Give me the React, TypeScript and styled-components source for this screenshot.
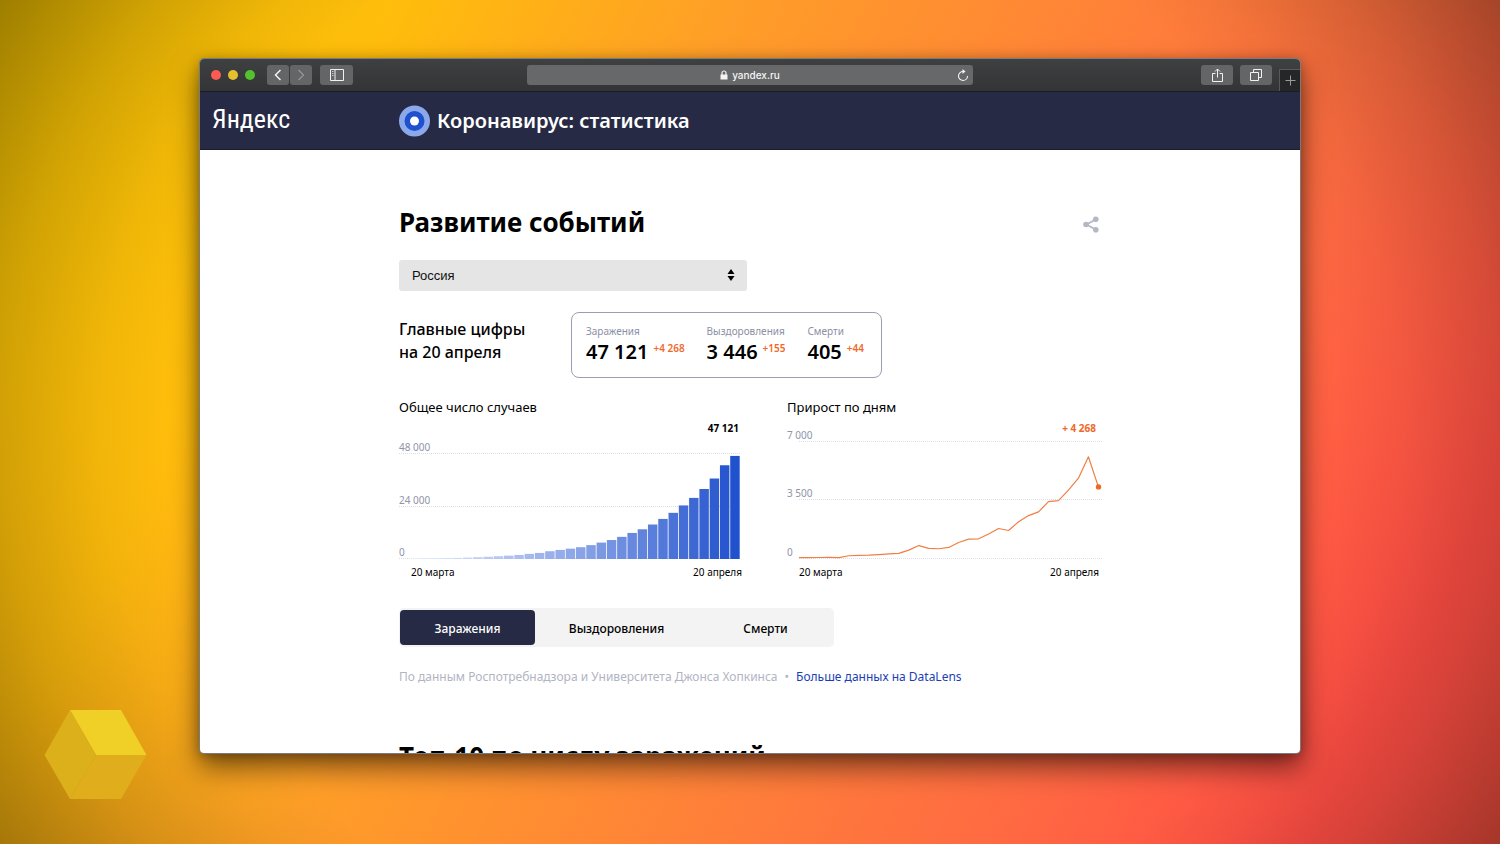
import React, { useState } from "react";
import styled, { createGlobalStyle } from "styled-components";

const sans = `"Noto Sans", "Open Sans", sans-serif`;

const GlobalStyle = createGlobalStyle`
  * { box-sizing: border-box; }
  body { margin: 0; font-family: ${sans}; color: #000; }
  button, select { font-family: inherit; }
  h1, h2, h3, p, dl, dd, dt, figure { margin: 0; font-weight: inherit; }
  svg { display: block; }
`;

const Desktop = styled.div`
  position: relative;
  height: 100vh;
  padding: 58px 199px 90px;
  overflow: hidden;
  background:
    radial-gradient(ellipse 50% 83% at 50% 50%, transparent 78%, rgba(30, 20, 0, 0.05) 87%, rgba(30, 20, 0, 0.18) 100%, rgba(30, 20, 0, 0.4) 117%),
    linear-gradient(118deg, #f2c400 0%, #ffbc0c 21%, #ff9e28 38%, #ff7e3a 60%, #ff6a42 74%, #ff4c45 90%);
`;

const Cube = styled.svg`
  position: absolute;
  left: 44px;
  bottom: 44px;
`;

const Browser = styled.div`
  display: flex;
  flex-direction: column;
  height: 100%;
  border: 1px solid rgba(90, 90, 90, 0.8);
  border-radius: 5px;
  overflow: hidden;
  background: #fff;
  box-shadow: 0 14px 28px rgba(0, 0, 0, 0.5), 0 2px 12px rgba(0, 0, 0, 0.25);
`;

const TitleBar = styled.div`
  display: grid;
  grid-template-columns: 1fr 446px 1fr;
  align-items: center;
  flex: none;
  height: 33px;
  background: linear-gradient(#3e4042, #333435);
  border-bottom: 1px solid #1c1d22;
`;

const BarLeft = styled.div`
  display: flex;
  align-items: center;
  padding-left: 11px;
`;

const Lights = styled.div`
  display: flex;
  gap: 7px;
  margin-right: 12px;
`;

const Light = styled.span<{ $color: string }>`
  width: 10px;
  height: 10px;
  border-radius: 50%;
  background: ${(p) => p.$color};
`;

const ToolButton = styled.button<{ $width: number; $dim?: boolean }>`
  display: flex;
  align-items: center;
  justify-content: center;
  width: ${(p) => p.$width}px;
  height: 20px;
  padding: 0;
  border: 0;
  border-radius: 3px;
  background: #646567;
  color: ${(p) => (p.$dim ? "#949597" : "#f2f2f2")};
`;

const NavGroup = styled.div`
  display: flex;
  gap: 1px;
  margin-right: 8px;
`;

const AddressBar = styled.div`
  display: grid;
  grid-template-columns: 1fr auto 1fr;
  align-items: center;
  height: 20px;
  padding: 0 4px;
  border-radius: 3px;
  background: #67686a;
  color: #f4f4f4;
`;

const Address = styled.div`
  display: flex;
  grid-column: 2;
  align-items: center;
  gap: 4px;
  font: 500 10px/20px Inter, "Liberation Sans", sans-serif;
`;

const ReloadButton = styled.button`
  justify-self: end;
  padding: 0;
  border: 0;
  background: none;
  color: inherit;
`;

const BarRight = styled.div`
  display: flex;
  align-items: center;
  align-self: stretch;
  justify-content: flex-end;
  gap: 7px;
`;

const NewTab = styled.button`
  display: flex;
  align-items: center;
  justify-content: center;
  align-self: flex-end;
  width: 21px;
  height: 22px;
  padding: 0;
  border: solid #58595b;
  border-width: 1px 0 0 1px;
  background: #252628;
  color: #9b9b9b;
`;

const SiteHeader = styled.header`
  display: grid;
  grid-template-columns: 1fr minmax(0, 702px) 1fr;
  align-items: center;
  flex: none;
  height: 58px;
  background: #272a45;
  border-bottom: 1px solid #1a1c35;
  color: #fff;
`;

const Logo = styled.a`
  padding: 0 0 4px 12px;
  font: 400 26px/36px "Roboto Condensed", Roboto, sans-serif;
  color: #fff;
  text-decoration: none;
`;

const Brand = styled.div`
  display: flex;
  align-items: center;
  gap: 7px;
  font-size: 20px;
  line-height: 28px;
  font-weight: 600;
`;

const Main = styled.main`
  width: 100%;
  max-width: 702px;
  margin: 0 auto;
  padding-top: 52px;
`;

const HeadingRow = styled.div`
  display: flex;
  align-items: center;
  justify-content: space-between;
`;

const Heading = styled.h1`
  font-size: 26px;
  line-height: 40px;
  font-weight: 700;
`;

const ShareButton = styled.button`
  margin: 4px 2px 0 0;
  padding: 0;
  border: 0;
  background: none;
  color: #b4b8c5;
`;

const SelectBox = styled.label`
  display: block;
  position: relative;
  width: 348px;
  margin-top: 18px;
  svg {
    position: absolute;
    right: 12px;
    top: 9px;
    pointer-events: none;
  }
`;

const Select = styled.select`
  display: block;
  width: 100%;
  height: 31px;
  padding: 0 13px;
  appearance: none;
  border: 0;
  border-radius: 3px;
  background: #e5e5e5;
  color: #111;
  font: 13px/31px "Liberation Sans", sans-serif;
`;

const Summary = styled.section`
  display: flex;
  align-items: center;
  margin-top: 21px;
`;

const SummaryTitle = styled.h2`
  width: 172px;
  padding-bottom: 8px;
  font-size: 16px;
  line-height: 23px;
  font-weight: 500;
`;

const Figures = styled.dl`
  display: flex;
  gap: 22px;
  height: 66px;
  padding: 11px 17px 0 14px;
  border: 1px solid #9a9eb0;
  border-radius: 8px;
`;

const FigureLabel = styled.dt`
  font-size: 10px;
  line-height: 14px;
  color: #8b90a6;
`;

const FigureValue = styled.dd`
  display: flex;
  gap: 5px;
  font-size: 20px;
  line-height: 28px;
  font-weight: 600;
`;

const Delta = styled.span`
  font-size: 10px;
  line-height: 20px;
  color: #f0692a;
`;

const Charts = styled.div`
  display: grid;
  grid-template-columns: 344px 315px;
  column-gap: 44px;
  margin-top: 19px;
`;

const ChartTitle = styled.figcaption`
  font-size: 13px;
  line-height: 20px;
`;

const ChartSvg = styled.svg`
  overflow: visible;
  text {
    font-family: ${sans};
    font-size: 10px;
  }
`;

const AxisText = styled.text`
  fill: #8f94a8;
`;

const DateText = styled.text`
  fill: #000;
`;

const PeakText = styled.text<{ $color: string }>`
  font-weight: 700;
  fill: ${(p) => p.$color};
`;

const GridLine = styled.line`
  stroke: #dcdfe6;
  stroke-dasharray: 1 1;
`;

const Tabs = styled.div`
  display: inline-flex;
  margin-top: 21px;
  padding: 2px 1px;
  border-radius: 5px;
  background: #f3f3f3;
`;

const Tab = styled.button<{ $active: boolean; $width: number }>`
  width: ${(p) => p.$width}px;
  height: 35px;
  padding: 1px 0 0;
  border: 0;
  border-radius: 4px;
  background: ${(p) => (p.$active ? "#272a45" : "transparent")};
  color: ${(p) => (p.$active ? "#fff" : "#000")};
  font-size: 12px;
  font-weight: 500;
`;

const Source = styled.p`
  margin-top: 20px;
  font-size: 12px;
  line-height: 20px;
  color: #b1b4c3;
`;

const Dot = styled.span`
  margin: 0 7px;
`;

const SourceLink = styled.a`
  color: #1a3fb5;
  text-decoration: none;
`;

const NextHeading = styled.h2`
  margin-top: 49px;
  font-size: 26px;
  line-height: 40px;
  font-weight: 700;
`;

const totals = [
  253, 306, 367, 438, 495, 658, 840, 1036, 1264, 1534, 1836, 2337, 2777, 3548, 4149, 4731, 5389, 6343, 7497, 8672,
  10131, 11917, 13584, 15770, 18328, 21102, 24490, 27938, 32008, 36793, 42853, 47121,
];

const daily = [
  54, 53, 61, 71, 57, 163, 182, 196, 228, 270, 302, 501, 771, 601, 582, 658, 954, 1154, 1175, 1459, 1786, 1667, 2186,
  2558, 2774, 3388, 3448, 4070, 4785, 6060, 4268,
];

const mix = (t: number) => {
  const from = [228, 235, 252];
  const mid = [130, 158, 229];
  const to = [33, 82, 205];
  const [a, b, k] = t < 0.55 ? [from, mid, t / 0.55] : [mid, to, (t - 0.55) / 0.45];
  return `rgb(${a.map((v, i) => Math.round(v + (b[i] - v) * k)).join(",")})`;
};

function TotalsChart() {
  const step = 329 / totals.length;
  return (
    <ChartSvg width="344" height="170" role="img" aria-label="Общее число случаев">
      {[
        ["48 000", 36],
        ["24 000", 89],
        ["0", 141],
      ].map(([label, y]) => (
        <g key={label}>
          <AxisText x="0" y={Number(y) - 2}>{label}</AxisText>
          <GridLine x1="0" x2="341" y1={Number(y) + 0.5} y2={Number(y) + 0.5} />
        </g>
      ))}
      {totals.map((v, i) => {
        const h = (v / 48000) * 105;
        return <rect key={v} x={12.5 + i * step} y={142 - h} width={step - 0.8} height={h} fill={mix(i / 31)} />;
      })}
      <PeakText $color="#000" x="340" y="15" textAnchor="end">47 121</PeakText>
      <DateText x="12" y="159">20 марта</DateText>
      <DateText x="343" y="159" textAnchor="end">20 апреля</DateText>
    </ChartSvg>
  );
}

function DailyChart() {
  const points = daily.map((v, i) => `${12 + i * 9.98},${141.5 - (v / 7000) * 117.5}`).join(" ");
  return (
    <ChartSvg width="315" height="170" role="img" aria-label="Прирост по дням">
      {[
        ["7 000", 24],
        ["3 500", 82],
        ["0", 141],
      ].map(([label, y]) => (
        <g key={label}>
          <AxisText x="0" y={Number(y) - 2}>{label}</AxisText>
          <GridLine x1="12" x2="315" y1={Number(y) + 0.5} y2={Number(y) + 0.5} />
        </g>
      ))}
      <polyline points={points} fill="none" stroke="#ef7f43" strokeWidth="1.2" strokeLinejoin="round" />
      <circle cx="311.5" cy="69.9" r="2.7" fill="#ee6a22" />
      <PeakText $color="#f0692a" x="309" y="15" textAnchor="end">+ 4 268</PeakText>
      <DateText x="12" y="159">20 марта</DateText>
      <DateText x="312" y="159" textAnchor="end">20 апреля</DateText>
    </ChartSvg>
  );
}

const figures = [
  { label: "Заражения", value: "47 121", delta: "+4 268" },
  { label: "Выздоровления", value: "3 446", delta: "+155" },
  { label: "Смерти", value: "405", delta: "+44" },
];

const tabs = [
  { label: "Заражения", width: 135 },
  { label: "Выздоровления", width: 163 },
  { label: "Смерти", width: 135 },
];

export default function App() {
  const [active, setActive] = useState(0);
  const line = { fill: "none", stroke: "currentColor" };
  return (
    <>
      <GlobalStyle />
      <Desktop>
        <Cube width="103" height="91" viewBox="0 0 103 91" aria-hidden="true">
          <path d="M26 1H77L102.500 46H52Z" fill="#f0cf27" />
          <path d="M26 1L52 46L26 90L0.500 46Z" fill="#dbb01a" />
          <path d="M52 46H102.500L77 90H26Z" fill="#e0ae1d" />
        </Cube>
        <Browser>
          <TitleBar>
            <BarLeft>
              <Lights>
                <Light $color="#fb5b52" />
                <Light $color="#e5bf2d" />
                <Light $color="#53c22c" />
              </Lights>
              <NavGroup>
                <ToolButton $width={22} aria-label="Назад">
                  <svg width="8" height="12" {...line} strokeWidth="1.5"><path d="M6.500 1L1.500 6L6.500 11" /></svg>
                </ToolButton>
                <ToolButton $width={22} $dim aria-label="Вперёд">
                  <svg width="8" height="12" {...line} strokeWidth="1.300"><path d="M1.500 1L6.500 6L1.500 11" /></svg>
                </ToolButton>
              </NavGroup>
              <ToolButton $width={33} aria-label="Боковая панель">
                <svg width="14" height="12" {...line}>
                  <path d="M0.500 0.500H13.500V11.500H0.500ZM5 0.500V11.500" />
                  <path d="M2 2.500H3.500M2 4.500H3.500M2 6.500H3.500" strokeWidth="0.700" />
                </svg>
              </ToolButton>
            </BarLeft>
            <AddressBar>
              <Address>
                <svg width="8" height="10">
                  <path d="M0.500 4.500H7.500V9.500H0.500Z" fill="currentColor" />
                  <path d="M2 5V3A2 2 0 0 1 6 3V5" {...line} strokeWidth="1.200" />
                </svg>
                yandex.ru
              </Address>
              <ReloadButton aria-label="Обновить">
                <svg width="12" height="13" {...line} strokeWidth="1.100">
                  <path d="M10.500 7A4.500 4.500 0 1 1 6 2.500H7.500" />
                  <path d="M5.500 0L8.500 2.500L5.500 5Z" fill="currentColor" stroke="none" />
                </svg>
              </ReloadButton>
            </AddressBar>
            <BarRight>
              <ToolButton $width={32} aria-label="Поделиться страницей">
                <svg width="11" height="14" {...line}>
                  <path d="M3.500 5.500H0.500V13.500H10.500V5.500H7.500M5.500 9.500V1M3 3.500L5.500 1L8 3.500" />
                </svg>
              </ToolButton>
              <ToolButton $width={32} aria-label="Все вкладки">
                <svg width="12" height="12" {...line}>
                  <path d="M0.500 3.500H8.500V11.500H0.500ZM3.500 3.500V0.500H11.500V8.500H8.500" />
                </svg>
              </ToolButton>
              <NewTab aria-label="Новая вкладка">
                <svg width="11" height="11" {...line}><path d="M5.500 0.500V10.500M0.500 5.500H10.500" /></svg>
              </NewTab>
            </BarRight>
          </TitleBar>
          <SiteHeader>
            <Logo href="#">Яндекс</Logo>
            <Brand>
              <svg width="31" height="32" viewBox="0 0 31 32" aria-hidden="true">
                <circle cx="15.500" cy="16" r="15.500" fill="#8ba8ea" />
                <circle cx="15.500" cy="16" r="10" fill="#1e50cf" />
                <circle cx="15.500" cy="16" r="4.500" fill="#fff" />
              </svg>
              Коронавирус: статистика
            </Brand>
          </SiteHeader>
          <Main>
            <HeadingRow>
              <Heading>Развитие событий</Heading>
              <ShareButton aria-label="Поделиться">
                <svg width="16" height="17" fill="currentColor">
                  <path d="M13 3.200L3.500 8.500L13 13.800" fill="none" stroke="currentColor" strokeWidth="1.800" />
                  <circle cx="3" cy="8.500" r="2.800" />
                  <circle cx="12.800" cy="3.200" r="2.800" />
                  <circle cx="12.800" cy="13.800" r="2.800" />
                </svg>
              </ShareButton>
            </HeadingRow>
            <SelectBox>
              <Select aria-label="Страна" defaultValue="Россия">
                <option>Россия</option>
              </Select>
              <svg width="8" height="12"><path d="M4 0L7.500 5H0.500ZM4 12L0.500 7H7.500Z" /></svg>
            </SelectBox>
            <Summary>
              <SummaryTitle>Главные цифры<br />на 20 апреля</SummaryTitle>
              <Figures>
                {figures.map((f) => (
                  <div key={f.label}>
                    <FigureLabel>{f.label}</FigureLabel>
                    <FigureValue>{f.value}<Delta>{f.delta}</Delta></FigureValue>
                  </div>
                ))}
              </Figures>
            </Summary>
            <Charts>
              <figure>
                <ChartTitle>Общее число случаев</ChartTitle>
                <TotalsChart />
              </figure>
              <figure>
                <ChartTitle>Прирост по дням</ChartTitle>
                <DailyChart />
              </figure>
            </Charts>
            <Tabs role="tablist">
              {tabs.map((t, i) => (
                <Tab key={t.label} role="tab" aria-selected={i === active} $active={i === active} $width={t.width} onClick={() => setActive(i)}>
                  {t.label}
                </Tab>
              ))}
            </Tabs>
            <Source>
              По данным Роспотребнадзора и Университета Джонса Хопкинса<Dot>•</Dot>
              <SourceLink href="#">Больше данных на DataLens</SourceLink>
            </Source>
            <NextHeading>Топ-10 по числу заражений</NextHeading>
          </Main>
        </Browser>
      </Desktop>
    </>
  );
}
